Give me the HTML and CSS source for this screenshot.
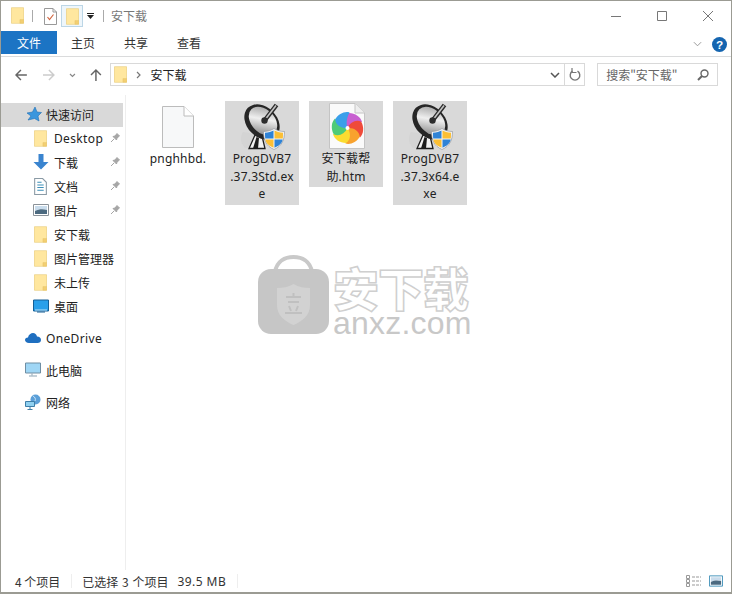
FILE: index.html
```html
<!DOCTYPE html>
<html lang="zh">
<head>
<meta charset="utf-8">
<title>安下载</title>
<link rel="stylesheet" href="styles.css">
</head>
<body>
<svg class="defs" width="0" height="0">
  <defs>
    <linearGradient id="dishFill" x1="0" y1="0" x2="1" y2="1">
      <stop offset="0" stop-color="#8e8e8e"/>
      <stop offset=".45" stop-color="#efefef"/>
      <stop offset="1" stop-color="#6f6f6f"/>
    </linearGradient>
    <symbol id="folder" viewBox="0 0 16 20">
      <path d="M.5.5H15.500V19.500H.5Z" fill="#fde08a" stroke="#e9cf85"/>
      <path d="M1 1H15V19H1Z" fill="#ffe79f"/>
      <path d="M11 15H15.500V19.500H11Z" fill="#f3cf72" stroke="#e7c56c" stroke-width=".6"/>
    </symbol>
    <symbol id="dish" viewBox="0 0 48 48">
      <path d="M5 30C2 35 2 41 7 46H14L16 32Z" fill="#cfcfcf" opacity=".55"/>
      <path d="M17 33 11 46.500H27L24 34Z" fill="#f2f2f2" stroke="#1d1d1d" stroke-width="1.300"/>
      <path d="M18.500 35 15 46.500H20L21 36Z" fill="#1d1d1d"/>
      <ellipse cx="24" cy="20" rx="20" ry="15" transform="rotate(45 24 20)" fill="#262626"/>
      <ellipse cx="25" cy="19" rx="16.500" ry="11.500" transform="rotate(45 25 19)" fill="url(#dishFill)"/>
      <path d="M27 18 38.500 3" stroke="#2a2a2a" stroke-width="4.500"/>
      <path d="M28 16.500 38 3.500" stroke="#c4c4c4" stroke-width="1.600"/>
      <circle cx="26.500" cy="18.500" r="3.200" fill="#2c2c2c"/>
    </symbol>
    <symbol id="shield" viewBox="0 0 22 22">
      <path d="M11 .5C14 2.500 17.500 3.500 21.500 3.500C21.500 12 19 18 11 21.500C3 18 .5 12 .5 3.500C4.500 3.500 8 2.500 11 .5Z" fill="#f4f4f4" stroke="#8a8f96" stroke-width=".6"/>
      <path d="M10.500 2.500V10.500H2.200C2 8 2 6 2 4.700C5.500 4.700 8.500 3.700 10.500 2.500Z" fill="#2f83d6"/>
      <path d="M11.500 2.500C13.500 3.700 16.500 4.700 20 4.700C20 7 20 9 19.800 10.500H11.500Z" fill="#fbbf35"/>
      <path d="M2.300 11.500H10.500V19.700C5 17.500 2.900 15 2.300 11.500Z" fill="#fbbf35"/>
      <path d="M11.500 11.500H19.700C19 15 17 17.500 11.500 19.700Z" fill="#2f83d6"/>
    </symbol>
    <symbol id="pin" viewBox="0 0 10 10">
      <path d="M1 9 4 6M3 3.500 6.500 7 7 5 9.500 3 7 .5 5 3Z" fill="#a6a6a6" stroke="#a6a6a6"/>
    </symbol>
  </defs>
</svg>

<div class="window">
  <header class="titlebar">
    <svg class="qat-folder"><use href="#folder"/></svg>
    <span class="qat-sep"></span>
    <svg class="qat-check" viewBox="0 0 13 17">
      <path d="M.5.5H9L12.500 4V16.500H.5Z" fill="#fff" stroke="#999"/>
      <path d="M9 .5V4H12.500" fill="none" stroke="#999"/>
      <path d="M3.500 9 5.500 11.500 9.500 6.500" fill="none" stroke="#d2653f" stroke-width="1.200"/>
    </svg>
    <span class="qat-active"><svg class="qat-folder-in"><use href="#folder"/></svg></span>
    <svg class="qat-drop" viewBox="0 0 7 6"><path d="M0 .5H7" stroke="#222"/><path d="M0 2H7L3.500 6Z" fill="#222"/></svg>
    <span class="qat-sep qat-sep-b"></span>
    <span class="title-text">安下载</span>
    <div class="caption">
      <svg class="cap-btn" viewBox="0 0 46 30"><path d="M18 15.500H28" stroke="#777"/></svg>
      <svg class="cap-btn" viewBox="0 0 46 30"><path d="M18.500 10.500H27.500V19.500H18.500Z" fill="none" stroke="#777"/></svg>
      <svg class="cap-btn" viewBox="0 0 46 30"><path d="M18 10 28 20M28 10 18 20" stroke="#777"/></svg>
    </div>
  </header>

  <nav class="ribbon">
    <span class="tab tab-file">文件</span>
    <span class="tab">主页</span>
    <span class="tab">共享</span>
    <span class="tab">查看</span>
    <div class="ribbon-right">
      <svg class="rib-chev" viewBox="0 0 10 6"><path d="M1 1 5 5 9 1" fill="none" stroke="#999" stroke-width="1.100"/></svg>
      <svg class="help" viewBox="0 0 14 14"><circle cx="7" cy="7" r="7" fill="#1565b0"/><text x="7" y="11" text-anchor="middle" class="help-q">?</text></svg>
    </div>
  </nav>

  <div class="addrbar">
    <svg class="nav-ico" viewBox="0 0 12 12"><path d="M12 6H1.500M6 1 1 6 6 11" fill="none" stroke="#666" stroke-width="1.500"/></svg>
    <svg class="nav-ico nav-fwd" viewBox="0 0 12 12"><path d="M0 6H10.500M6 1 11 6 6 11" fill="none" stroke="#ccc" stroke-width="1.500"/></svg>
    <svg class="nav-dn" viewBox="0 0 7 5"><path d="M1 1 3.500 3.500 6 1" fill="none" stroke="#888" stroke-width="1.200"/></svg>
    <svg class="nav-ico nav-up" viewBox="0 0 12 12"><path d="M6 12V1.500M1 6 6 1 11 6" fill="none" stroke="#666" stroke-width="1.500"/></svg>
    <div class="addr-box">
      <svg class="addr-folder"><use href="#folder"/></svg>
      <svg class="addr-chev" viewBox="0 0 5 8"><path d="M1 1 4 4 1 7" fill="none" stroke="#777" stroke-width="1.200"/></svg>
      <span class="addr-text">安下载</span>
      <svg class="addr-dd" viewBox="0 0 10 6"><path d="M1 1 5 5 9 1" fill="none" stroke="#555" stroke-width="1.500"/></svg>
      <span class="addr-refresh">
        <svg viewBox="0 0 12 13" class="refresh"><path d="M8.500 3.200A4.800 4.800 0 1 1 3.500 3.200" fill="none" stroke="#777" stroke-width="1.400"/><path d="M3 0V4.500H7.500" fill="none" stroke="#777" stroke-width="1.200"/></svg>
      </span>
    </div>
    <div class="search-box">
      <span class="search-text">搜索"安下载"</span>
      <svg class="search-ico" viewBox="0 0 12 12"><circle cx="7.500" cy="4.500" r="3.500" fill="none" stroke="#666" stroke-width="1.400"/><path d="M5 7 1 11" stroke="#666" stroke-width="2"/></svg>
    </div>
  </div>

  <div class="body">
    <aside class="sidebar">
      <div class="row row-top row-sel">
        <svg class="ico-sm" viewBox="0 0 16 16"><path d="M9 1 11 6 15.500 6.500 12 10 13 15 8.500 12.500 2 14 5 10 1 7 6.500 6Z" fill="#3a96dd" stroke="#1e6fb5" stroke-width=".6"/></svg>
        <span>快速访问</span>
      </div>
      <div class="row row-sub"><svg class="ico-f"><use href="#folder"/></svg><span class="label latin">Desktop</span><svg class="pin"><use href="#pin"/></svg></div>
      <div class="row row-sub"><svg class="ico-w" viewBox="0 0 16 16"><path d="M5.500 0H10.500V8H15.500L8 15.500.5 8H5.500Z" fill="#3a84cf"/></svg><span class="label">下载</span><svg class="pin"><use href="#pin"/></svg></div>
      <div class="row row-sub"><svg class="ico-f" viewBox="0 0 12 16"><path d="M.5.500H8L11.500 4V15.500H.5Z" fill="#fff" stroke="#8a9aa5"/><path d="M3 4H7M3 6.500H9M3 9H9M3 11.500H9" stroke="#3d8fb8"/></svg><span class="label">文档</span><svg class="pin"><use href="#pin"/></svg></div>
      <div class="row row-sub"><svg class="ico-w" viewBox="0 0 16 12"><path d="M.5.500H15.500V11.500H.5Z" fill="#fff" stroke="#8b9299"/><path d="M2 2H14V6C10 5 6 5 2 7Z" fill="#c9dcec"/><path d="M2 7C6 5 10 5 14 6V10H2Z" fill="#4c6a80"/></svg><span class="label">图片</span><svg class="pin"><use href="#pin"/></svg></div>
      <div class="row row-sub"><svg class="ico-f"><use href="#folder"/></svg><span class="label">安下载</span></div>
      <div class="row row-sub"><svg class="ico-f"><use href="#folder"/></svg><span class="label">图片管理器</span></div>
      <div class="row row-sub"><svg class="ico-f"><use href="#folder"/></svg><span class="label">未上传</span></div>
      <div class="row row-sub"><svg class="ico-w" viewBox="0 0 16 13"><path d="M.5.500H15.500V11.500H.5Z" fill="#2aa0ea" stroke="#145f96"/><path d="M2 10.500H14" stroke="#bfe3f7"/><path d="M4 12.500H12" stroke="#145f96"/></svg><span class="label">桌面</span></div>

      <div class="row row-top row-gap">
        <svg class="ico-sm" viewBox="0 0 16 11"><path d="M4 10.500C1.500 10.500 0 9 0 7.500S1 5 3 5C3.500 2 6 .5 8 .5S11.500 2 12 4C14.500 4 16 5.500 16 7.500S14.500 10.500 12.500 10.500Z" fill="#1f6fc0"/></svg>
        <span class="latin">OneDrive</span>
      </div>
      <div class="row row-top row-gap">
        <svg class="ico-sm" viewBox="0 0 16 15"><path d="M.5.500H15.500V10.500H.5Z" fill="#9fd6f5" stroke="#6f8ea3"/><path d="M7 11V13M4 13.500H12" stroke="#8ba3b3"/></svg>
        <span>此电脑</span>
      </div>
      <div class="row row-top row-gap">
        <svg class="ico-sm" viewBox="0 0 16 16"><circle cx="10.500" cy="5.500" r="5" fill="#5b9fd8"/><path d="M8 2C10 3 11 5 10 7" stroke="#cde6f7" fill="none"/><path d="M.5 7.500H9.500V12.500H.5Z" fill="#8fd0f0" stroke="#3e7ea8"/><path d="M5 13V15M2.500 15.500H7.500" stroke="#3e7ea8"/></svg>
        <span>网络</span>
      </div>
    </aside>

    <main class="files">
      <div class="tile">
        <svg class="big" viewBox="0 0 48 48"><path d="M8.500 4.500H30L39.500 14V45.500H8.500Z" fill="#f7f8f9" stroke="#bcbcbc"/><path d="M30 4.500V14H39.500" fill="#fff" stroke="#bcbcbc"/></svg>
        <span class="name">pnghhbd.</span>
      </div>
      <div class="tile tile-sel">
        <span class="big-wrap"><svg class="big"><use href="#dish"/></svg><svg class="badge"><use href="#shield"/></svg></span>
        <span class="name">ProgDVB7<br>.37.3Std.ex<br>e</span>
      </div>
      <div class="tile tile-sel">
        <svg class="big" viewBox="0 0 48 48">
          <path d="M7.500 1.500H33L42.500 11V46.500H7.500Z" fill="#fafafa" stroke="#c4c4c4"/>
          <path d="M33 1.500V11H42.500" fill="#eee" stroke="#c4c4c4"/>
          <path d="M25.500 26C22 21 22 14 27 11C33 11 39 15 40 20C35 20 29 22 25.500 26Z" fill="#c85fd0"/>
          <path d="M25.500 26C22 21 22 14 27 11C33 11 39 15 40 20C35 20 29 22 25.500 26Z" fill="#ef4a3a" transform="rotate(60 25.500 26)"/>
          <path d="M25.500 26C22 21 22 14 27 11C33 11 39 15 40 20C35 20 29 22 25.500 26Z" fill="#f8a22e" transform="rotate(120 25.500 26)"/>
          <path d="M25.500 26C22 21 22 14 27 11C33 11 39 15 40 20C35 20 29 22 25.500 26Z" fill="#fbdc30" transform="rotate(180 25.500 26)"/>
          <path d="M25.500 26C22 21 22 14 27 11C33 11 39 15 40 20C35 20 29 22 25.500 26Z" fill="#4ecb78" transform="rotate(240 25.500 26)"/>
          <path d="M25.500 26C22 21 22 14 27 11C33 11 39 15 40 20C35 20 29 22 25.500 26Z" fill="#3a9fea" transform="rotate(300 25.500 26)"/>
          <circle cx="25.500" cy="26" r="2" fill="#fff"/>
        </svg>
        <span class="name">安下载帮<br>助.htm</span>
      </div>
      <div class="tile tile-sel">
        <span class="big-wrap"><svg class="big"><use href="#dish"/></svg><svg class="badge"><use href="#shield"/></svg></span>
        <span class="name">ProgDVB7<br>.37.3x64.e<br>xe</span>
      </div>
    </main>

    <div class="watermark">
      <svg class="wm-bag" viewBox="0 0 71 80">
        <path d="M17 17C19 6 27 2 35.500 2S52 6 54 17" fill="none" stroke="#c9c9c9" stroke-width="4"/>
        <rect x="0" y="14" width="71" height="65" rx="13" fill="#c6c6c6"/>
        <path d="M35.500 29C41 32 46 33 52 33V50C52 60 45 66 35.500 70C26 66 19 60 19 50V33C25 33 30 32 35.500 29Z" fill="#d2d2d2"/>
        <path d="M28 42H43M30 47H41M35.500 38V42M31 51 33 56M40 51 38 56M27 58H44" stroke="#c0c0c0" stroke-width="2" fill="none"/>
      </svg>
      <div class="wm-text">
        <div class="wm-cn">安下载</div>
        <div class="wm-en">anxz.com</div>
      </div>
    </div>
  </div>

  <footer class="status">
    <span class="st-a">4 个项目</span>
    <span class="st-sep"></span>
    <span class="st-b">已选择 3 个项目</span>
    <span class="st-size">39.5 MB</span>
    <span class="st-sep st-sep-last"></span>
    <div class="views">
      <svg class="view-a" viewBox="0 0 16 12"><path d="M.5.500H3.500V3.500H.5ZM.5 4.500H3.500V7.500H.5ZM.5 8.500H3.500V11.500H.5Z" fill="none" stroke="#999"/><path d="M6 2H15M6 6H15M6 10H15" stroke="#999" stroke-dasharray="3 1"/></svg>
      <svg class="view-b" viewBox="0 0 15 12"><path d="M.5.500H14.500V11.500H.5Z" fill="#fff" stroke="#3d8fb8"/><path d="M2 2H13V6C9 5 6 5 2 7Z" fill="#c9dcec"/><path d="M2 7C6 5 9 5 13 6V10H2Z" fill="#4c6a80"/></svg>
    </div>
  </footer>
</div>
</body>
</html>
```
FILE: styles.css
```css
* { box-sizing: border-box; }
html, body { margin: 0; padding: 0; }
body {
  width: 732px;
  height: 594px;
  overflow: hidden;
  background: #fff;
  font-family: "Noto Sans CJK SC", "Noto Sans", sans-serif;
  font-size: 12px;
  color: #222;
}
.defs { position: absolute; }
.latin { letter-spacing: .35px; font-family: "Noto Sans", sans-serif; }
.window {
  width: 732px;
  height: 594px;
  display: flex;
  flex-direction: column;
  border: 1px solid #9b9b93;
  border-bottom-width: 2px;
  background: #fff;
  position: relative;
}

/* title bar */
.titlebar {
  height: 30px;
  display: flex;
  align-items: center;
  padding-left: 10px;
  flex: none;
}
.qat-folder { width: 13px; height: 17px; margin-top: -1px; }
.qat-sep { width: 1px; height: 12px; background: #aaa; margin-left: 8px; }
.qat-check { width: 13px; height: 17px; margin-left: 11px; }
.qat-active {
  width: 22px;
  height: 22px;
  margin-left: 4px;
  display: flex;
  align-items: center;
  justify-content: center;
  background: #eef6fb;
  border: 1px solid #bcd6e6;
}
.qat-folder-in { width: 13px; height: 17px; }
.qat-drop { width: 7px; height: 6px; margin-left: 4px; }
.qat-sep-b { margin-left: 9px; }
.title-text { margin-left: 7px; color: #777; font-size: 12px; line-height: 16px; }
.caption { margin-left: auto; display: flex; }
.cap-btn { width: 46px; height: 30px; }

/* ribbon tabs */
.ribbon {
  height: 26px;
  display: flex;
  align-items: flex-start;
  border-bottom: 1px solid #dadbdc;
  flex: none;
}
.tab {
  height: 23px;
  width: 53px;
  padding-right: 1px;
  line-height: 23px;
  text-align: center;
  font-size: 12px;
  color: #333;
}
.tab-file { width: 56px; padding-right: 0; background: #1c74c4; color: #fff; }
.ribbon-right { margin-left: auto; display: flex; align-items: center; padding-right: 4px; height: 26px; }
.rib-chev { width: 9px; height: 6px; margin-right: 10px; }
.help { width: 15px; height: 15px; }
.help-q { font: 700 11px "Liberation Sans", sans-serif; fill: #fff; }

/* address bar */
.addrbar {
  height: 38px;
  display: flex;
  align-items: flex-start;
  padding: 6px 13px 0 14px;
  flex: none;
}
.nav-ico { width: 12px; height: 12px; margin-top: 6px; }
.nav-fwd { margin-left: 16px; }
.nav-dn { width: 7px; height: 5px; margin-left: 14px; margin-top: 10px; }
.nav-up { margin-left: 14px; }
.addr-box {
  width: 481px;
  height: 23px;
  margin-left: 8px;
  border: 1px solid #d9d9d9;
  display: flex;
  align-items: center;
  padding-left: 3px;
}
.addr-folder { width: 13px; height: 17px; }
.addr-chev { width: 5px; height: 8px; margin-left: 9px; }
.addr-text { margin-left: 10px; color: #222; }
.addr-dd { width: 10px; height: 6px; margin-left: auto; margin-right: 4px; }
.addr-refresh {
  width: 20px;
  height: 21px;
  border-left: 1px solid #d9d9d9;
  display: flex;
  align-items: center;
  justify-content: center;
}
.refresh { width: 12px; height: 13px; }
.search-box {
  width: 122px;
  height: 23px;
  margin-left: 12px;
  border: 1px solid #d9d9d9;
  display: flex;
  align-items: center;
  padding: 0 8px;
  justify-content: space-between;
}
.search-text { color: #666; font-size: 12px; }
.search-ico { width: 12px; height: 12px; }

/* body */
.body { flex: 1; display: flex; position: relative; min-height: 0; }
.sidebar {
  width: 125px;
  flex: none;
  border-right: 1px solid #eeeeee;
  padding-top: 8px;
}
.row {
  height: 24px;
  padding-bottom: 2px;
  display: flex;
  align-items: center;
  color: #222;
  white-space: nowrap;
  position: relative;
}
.row-top { padding-left: 24px; gap: 5px; width: 122px; }
.row-sel { background: #d9d9d9; padding-left: 25px; gap: 4px; }
.row-gap { margin-top: 8px; }
.row-sub { padding-left: 31px; }
.ico-sm { width: 16px; height: 16px; flex: none; }
.ico-f { width: 13px; height: 17px; flex: none; }
.ico-w { width: 16px; height: 16px; flex: none; margin-right: 5px; margin-left: 1px; }
.row-sub .ico-f { margin-left: 2px; margin-right: 7px; }
.label { flex: none; }
.pin { width: 10px; height: 10px; position: absolute; left: 109px; top: 6px; }

/* file tiles */
.files {
  flex: 1;
  display: flex;
  align-items: flex-start;
  gap: 10px;
  padding: 6px 0 0 15px;
}
.tile {
  width: 74px;
  flex: none;
  display: flex;
  flex-direction: column;
  align-items: center;
  padding-top: 1px;
  padding-bottom: 2px;
}
.tile-sel { background: #d9d9d9; }
.big { width: 48px; height: 48px; display: block; }
.big-wrap { width: 48px; height: 48px; position: relative; display: block; }
.badge { width: 22px; height: 22px; position: absolute; right: 1px; bottom: 0; }
.name {
  line-height: 17.500px;
  text-align: center;
  font-family: "Noto Sans", "Noto Sans CJK SC", sans-serif;
  font-size: 12px;
  letter-spacing: .2px;
  color: #222;
  white-space: nowrap;
}

/* watermark */
.watermark {
  position: absolute;
  left: 257px;
  top: 160px;
  display: flex;
  gap: 4px;
  pointer-events: none;
}
.wm-bag { width: 71px; height: 80px; display: block; }
.wm-text { display: flex; flex-direction: column; padding-top: 7px; }
.wm-cn {
  font-family: "Noto Sans CJK SC", sans-serif;
  font-weight: 900;
  font-size: 46px;
  line-height: 48px;
  color: #fff;
  -webkit-text-stroke: 1.500px #cfcfcf;
  letter-spacing: -1px;
}
.wm-en {
  font-family: "Liberation Sans", sans-serif;
  font-size: 32px;
  line-height: 24px;
  margin-top: 1px;
  color: #c8c8c8;
  letter-spacing: .2px;
}

/* status bar */
.status {
  height: 22px;
  display: flex;
  align-items: center;
  padding-left: 14px;
  flex: none;
  color: #333;
}
.st-sep { width: 1px; height: 14px; background: #eee; margin: 0 10px 0 11px; }
.st-b { word-spacing: 1px; }
.st-size { margin-left: 9px; letter-spacing: .45px; font-family: "Noto Sans", sans-serif; }
.st-sep-last { margin-right: 0; }
.views { margin-left: auto; display: flex; align-items: center; gap: 7px; padding-right: 8px; }
.view-a { width: 16px; height: 12px; }
.view-b { width: 14px; height: 12px; }
```
